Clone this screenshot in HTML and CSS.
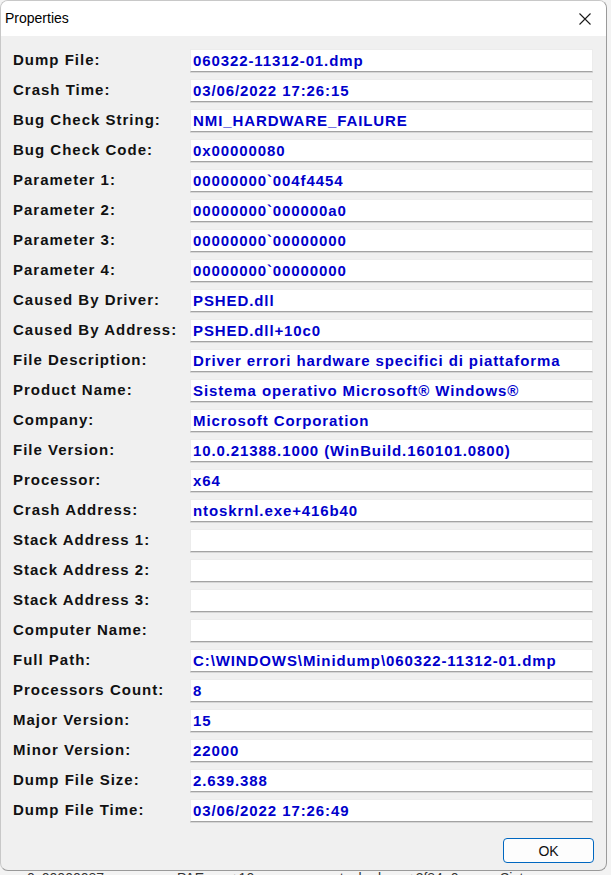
FILE: index.html
```html
<!DOCTYPE html>
<html>
<head>
<meta charset="utf-8">
<link rel="stylesheet" href="styles.css">
</head>
<body>
<div class="screen">
  <div class="window">
    <div class="titlebar">
      <span class="title">Properties</span>
      <svg class="close" width="12" height="12" viewBox="0 0 12 12"><path d="M0.5 0.5 L11.5 11.5 M11.5 0.5 L0.5 11.5" stroke="#1a1a1a" stroke-width="1.1" fill="none"/></svg>
    </div>
    <div class="body">
      <div class="grid">
        <div class="label">Dump File:</div><div class="value">060322-11312-01.dmp</div>
        <div class="label">Crash Time:</div><div class="value">03/06/2022 17:26:15</div>
        <div class="label">Bug Check String:</div><div class="value">NMI_HARDWARE_FAILURE</div>
        <div class="label">Bug Check Code:</div><div class="value">0x00000080</div>
        <div class="label">Parameter 1:</div><div class="value">00000000`004f4454</div>
        <div class="label">Parameter 2:</div><div class="value">00000000`000000a0</div>
        <div class="label">Parameter 3:</div><div class="value">00000000`00000000</div>
        <div class="label">Parameter 4:</div><div class="value">00000000`00000000</div>
        <div class="label">Caused By Driver:</div><div class="value">PSHED.dll</div>
        <div class="label">Caused By Address:</div><div class="value">PSHED.dll+10c0</div>
        <div class="label">File Description:</div><div class="value">Driver errori hardware specifici di piattaforma</div>
        <div class="label">Product Name:</div><div class="value">Sistema operativo Microsoft® Windows®</div>
        <div class="label">Company:</div><div class="value">Microsoft Corporation</div>
        <div class="label">File Version:</div><div class="value">10.0.21388.1000 (WinBuild.160101.0800)</div>
        <div class="label">Processor:</div><div class="value">x64</div>
        <div class="label">Crash Address:</div><div class="value">ntoskrnl.exe+416b40</div>
        <div class="label">Stack Address 1:</div><div class="value"></div>
        <div class="label">Stack Address 2:</div><div class="value"></div>
        <div class="label">Stack Address 3:</div><div class="value"></div>
        <div class="label">Computer Name:</div><div class="value"></div>
        <div class="label">Full Path:</div><div class="value">C:\WINDOWS\Minidump\060322-11312-01.dmp</div>
        <div class="label">Processors Count:</div><div class="value">8</div>
        <div class="label">Major Version:</div><div class="value">15</div>
        <div class="label">Minor Version:</div><div class="value">22000</div>
        <div class="label">Dump File Size:</div><div class="value">2.639.388</div>
        <div class="label">Dump File Time:</div><div class="value">03/06/2022 17:26:49</div>
      </div>
      <div class="buttons">
        <button class="ok">OK</button>
      </div>
    </div>
  </div>
  <div class="behind">
    <span class="b1">0x00000087</span><span class="b2">PAE.exe+10</span><span class="b3">ntoskrnl.exe+3f84a0</span><span class="b4">Sistema operativo</span>
  </div>
</div>
</body>
</html>
```
FILE: styles.css
```css
html, body {
  margin: 0;
  padding: 0;
}
body {
  background: #f3f3f3;
  width: 611px;
  height: 875px;
  overflow: hidden;
}
.screen {
  width: 611px;
  height: 875px;
  overflow: hidden;
  background: #f3f3f3;
}
.window {
  box-sizing: border-box;
  width: 607px;
  height: 871px;
  border: 1px solid #9a9a9a;
  border-top-color: #c8c8c8;
  border-left-color: #c8c8c8;
  border-radius: 8px;
  background: #f0f0f0;
  overflow: hidden;
  display: flex;
  flex-direction: column;
}
.titlebar {
  height: 35px;
  flex: none;
  background: #ffffff;
  display: flex;
  align-items: center;
  justify-content: space-between;
  padding: 0 15px 0 4px;
}
.title {
  font-family: "Liberation Sans", Arial, sans-serif;
  font-size: 14px;
  color: #000;
  margin-top: -1px;
}
.close {
  display: block;
  margin-top: 1px;
}
.body {
  flex: 1;
  padding: 13px 12px 0 12px;
  display: flex;
  flex-direction: column;
}
.grid {
  display: grid;
  grid-template-columns: 177px 403px;
  grid-auto-rows: 23px;
  row-gap: 7px;
}
.label, .value {
  font-family: "Liberation Sans", Arial, sans-serif;
  font-weight: bold;
  font-size: 15px;
  white-space: nowrap;
  line-height: 21px;
}
.label {
  color: #111;
  letter-spacing: 1px;
}
.value {
  box-sizing: border-box;
  background: #ffffff;
  color: #0000cc;
  letter-spacing: 0.9px;
  border: 1px solid #ececec;
  border-bottom: 1px solid #a3a3a3;
  box-shadow: 0 1px 0 #d6d6d6;
  padding-left: 2px;
  overflow: hidden;
}
.buttons {
  display: flex;
  justify-content: flex-end;
  padding-top: 16px;
}
.ok {
  width: 91px;
  height: 25px;
  box-sizing: border-box;
  border: 1px solid #0067c0;
  border-radius: 4px;
  background: #fdfdfd;
  font-family: "Liberation Sans", Arial, sans-serif;
  font-size: 14px;
  color: #111;
  padding: 0;
}
.behind {
  display: flex;
  height: 4px;
  font-family: "Liberation Sans", Arial, sans-serif;
  font-size: 14px;
  line-height: 14px;
  color: #333;
}
.behind span {
  display: block;
}
.b1 { margin-left: 27px; width: 150px; }
.b2 { width: 155px; }
.b3 { width: 168px; }
.b4 { width: 110px; }
```
